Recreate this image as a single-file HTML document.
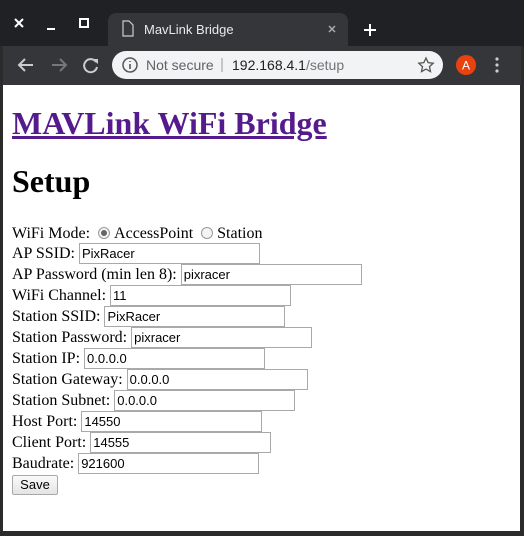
<!DOCTYPE html>
<html><head><style>
*{margin:0;padding:0;box-sizing:border-box}
body{width:524px;height:536px;background:#2b2b2b;position:relative;overflow:hidden;font-family:"Liberation Sans",sans-serif}
.tabbar{position:absolute;left:0;top:0;width:524px;height:46px;background:#202124}
.tab{position:absolute;left:108px;top:13px;width:240px;height:34px;background:#35363a;border-radius:8px 8px 0 0}
.toolbar{position:absolute;left:3px;top:46px;width:518px;height:39px;background:#35363a}
.omni{position:absolute;left:112px;top:51px;width:331px;height:28px;background:#f1f3f4;border-radius:14px}
.page{position:absolute;left:3px;top:85px;width:517px;height:446px;background:#fff;font-family:"Liberation Serif",serif;font-size:16px;color:#000}
.h1a{position:absolute;left:9px;top:20px;font-size:32px;font-weight:bold;color:#551a8b;text-decoration:underline;white-space:nowrap}
.h1b{position:absolute;left:9px;top:78px;font-size:32px;font-weight:bold;white-space:nowrap}
.row{position:absolute;left:9px;height:21px;line-height:21px;white-space:nowrap}
.in{display:inline-block;vertical-align:top;width:181px;height:21px;border:1px solid #a9a9a9;font-family:"Liberation Sans",sans-serif;font-size:13px;line-height:19px;padding-left:2px;margin-left:4px}
.rad{display:inline-block;width:12px;height:12px;border:1px solid #999;border-radius:50%;vertical-align:-1px;margin:0 4px 0 8px;background:#f4f4f4;position:relative}
.rad.on::after{content:"";position:absolute;left:2px;top:2px;width:6px;height:6px;border-radius:50%;background:#666}
.btn{position:absolute;left:9px;top:390px;width:46px;height:20px;border:1px solid #a9a9a9;border-radius:2px;background:linear-gradient(#fafafa,#e4e4e4);font-family:"Liberation Sans",sans-serif;font-size:13px;line-height:18px;text-align:center}
</style></head><body>
<div class="tabbar"></div>
<svg style="position:absolute;left:0;top:0" width="524" height="46">
<path d="M15 19l8 8M23 19l-8 8" stroke="#fff" stroke-width="2"/>
<path d="M47 29h8" stroke="#fff" stroke-width="2"/>
<rect x="80" y="19" width="8" height="8" fill="none" stroke="#fff" stroke-width="2"/>
<path d="M364 30h12M370 24v12" stroke="#fff" stroke-width="2"/>
</svg>
<div class="tab"></div>
<svg style="position:absolute;left:108px;top:13px" width="240" height="34">
<path d="M15 8h6l4 4v11h-10z" fill="none" stroke="#ccc" stroke-width="1.2"/>
<text x="36" y="21" fill="#e8eaed" font-family="Liberation Sans" font-size="13">MavLink Bridge</text>
<path d="M221 13l6 6M227 13l-6 6" stroke="#aaa" stroke-width="1.5"/>
</svg>
<div class="toolbar"></div>
<svg style="position:absolute;left:0;top:46px" width="524" height="39">
<path d="M33 19h-14M25 13l-6 6 6 6" fill="none" stroke="#ccc" stroke-width="2"/>
<path d="M52 19h14M60 13l6 6-6 6" fill="none" stroke="#777" stroke-width="2"/>
<path d="M96 16a6.5 6.5 0 1 0 1 5" fill="none" stroke="#ccc" stroke-width="2"/><path d="M92 13h6v5z" fill="#ccc"/>
<circle cx="466" cy="19" r="10" fill="#e8430f"/><text x="466" y="23.5" fill="#fff" text-anchor="middle" font-family="Liberation Sans" font-size="12">A</text>
<circle cx="497" cy="13" r="1.6" fill="#ccc"/><circle cx="497" cy="19" r="1.6" fill="#ccc"/><circle cx="497" cy="25" r="1.6" fill="#ccc"/>
</svg>
<div class="omni"></div>
<svg style="position:absolute;left:112px;top:51px" width="331" height="28">
<circle cx="18" cy="14" r="7" fill="none" stroke="#555" stroke-width="1.5"/><path d="M18 13v5M18 10v1" stroke="#555" stroke-width="1.6"/>
<text x="34" y="19" fill="#5f6368" font-family="Liberation Sans" font-size="14">Not secure</text>
<path d="M110 7v14" stroke="#999"/>
<text x="120" y="19" fill="#202124" font-family="Liberation Sans" font-size="14">192.168.4.1<tspan fill="#70757a">/setup</tspan></text>
<path d="M314 7l2.2 4.6 5 .6-3.7 3.4 1 5-4.5-2.5-4.5 2.5 1-5-3.7-3.4 5-.6z" fill="none" stroke="#555" stroke-width="1.3"/>
</svg>
<div class="omni" style="display:none"></div>
<div class="page">
<div class="h1a">MAVLink WiFi Bridge</div>
<div class="h1b">Setup</div>
<div class="row" style="top:138px">WiFi Mode:<span class="rad on"></span>AccessPoint<span class="rad"></span>Station</div>
<div class="row" style="top:158px">AP SSID:<span class="in">PixRacer</span></div>
<div class="row" style="top:179px">AP Password (min len 8):<span class="in">pixracer</span></div>
<div class="row" style="top:200px">WiFi Channel:<span class="in">11</span></div>
<div class="row" style="top:221px">Station SSID:<span class="in">PixRacer</span></div>
<div class="row" style="top:242px">Station Password:<span class="in">pixracer</span></div>
<div class="row" style="top:263px">Station IP:<span class="in">0.0.0.0</span></div>
<div class="row" style="top:284px">Station Gateway:<span class="in">0.0.0.0</span></div>
<div class="row" style="top:305px">Station Subnet:<span class="in">0.0.0.0</span></div>
<div class="row" style="top:326px">Host Port:<span class="in">14550</span></div>
<div class="row" style="top:347px">Client Port:<span class="in">14555</span></div>
<div class="row" style="top:368px">Baudrate:<span class="in">921600</span></div>
<div class="btn">Save</div>
</div>
</body></html>
